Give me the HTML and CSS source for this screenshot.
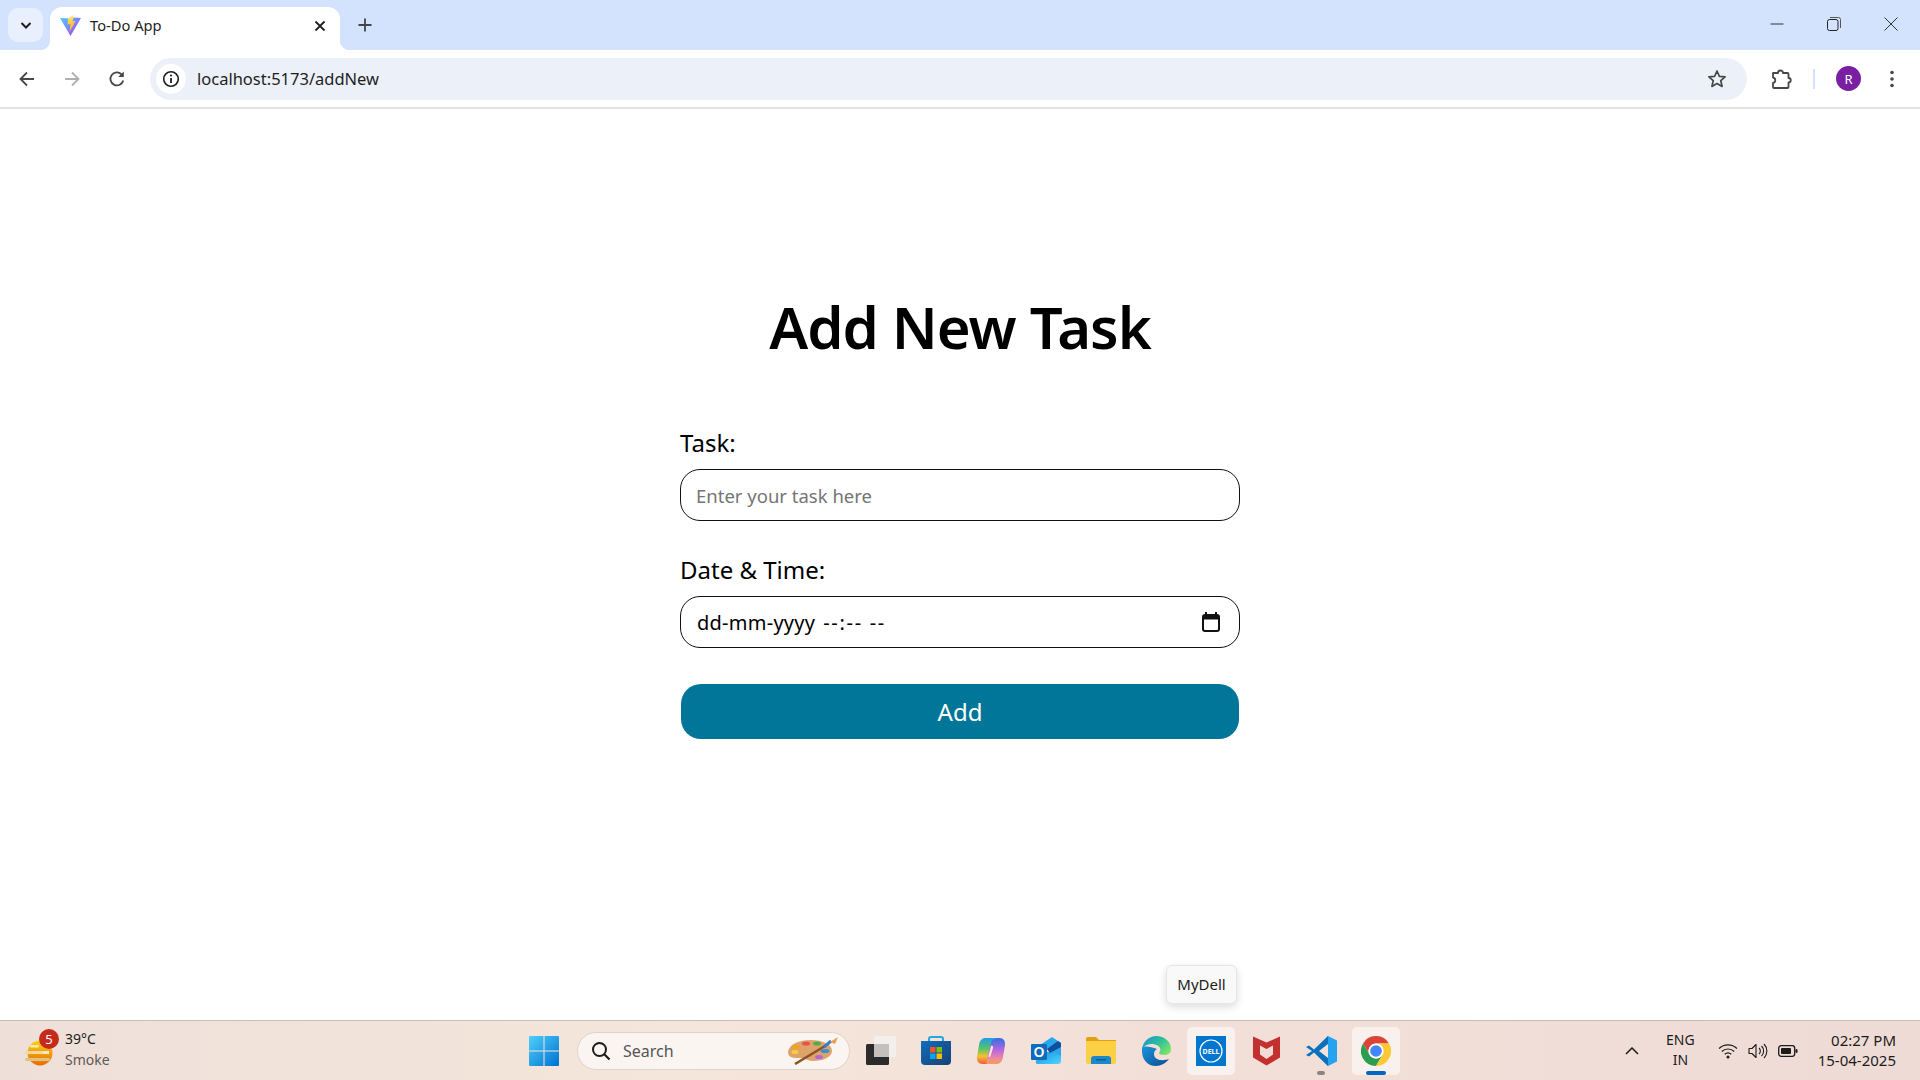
FILE: index.html
```html
<!DOCTYPE html>
<html lang="en">
  <head>
    <meta charset="UTF-8" />
    <meta name="viewport" content="width=device-width, initial-scale=1.0" />
    <title>To-Do App</title>
    <link rel="stylesheet" href="styles.css">
  </head>
  <body>
    <!-- Browser tab strip -->
    <div class="tabStrip">
      <div class="tabList">
        <svg width="14" height="14" viewBox="0 0 14 14"><path d="M2.500 5l4.500 4.500L11.500 5" fill="none" stroke="#1f1f1f" stroke-width="2"/></svg>
      </div>
      <div class="tab">
        <svg class="favicon" width="21" height="21" viewBox="0 0 21 21">
          <defs>
            <linearGradient id="viteA" x1="0" y1="0" x2="1" y2="1"><stop offset="0" stop-color="#41d1ff"/><stop offset="1" stop-color="#bd34fe"/></linearGradient>
            <linearGradient id="viteB" x1="0" y1="0" x2="0" y2="1"><stop offset="0" stop-color="#ffea83"/><stop offset="1" stop-color="#ffa800"/></linearGradient>
          </defs>
          <path d="M0 3l10.500 18L21 3l-6-.5-4.500 1z" fill="url(#viteA)"/>
          <path d="M8 3.500L14 0l-1.500 6.500 3-.5-6 11 1-8-3 .5z" fill="url(#viteB)"/>
        </svg>
        <span class="tabTitle">To-Do App</span>
        <svg class="tabClose" width="12" height="12" viewBox="0 0 12 12"><path d="M1.500 1.500l9 9M10.500 1.500l-9 9" stroke="#1f1f1f" stroke-width="1.800"/></svg>
      </div>
      <svg class="newTab" width="14" height="14" viewBox="0 0 14 14"><path d="M7 0.500v13M0.500 7h13" stroke="#444" stroke-width="1.800"/></svg>
      <div class="windowControls">
        <svg width="14" height="14" viewBox="0 0 14 14"><path d="M0.500 7h13" stroke="#333" stroke-width="1"/></svg>
        <svg width="14" height="14" viewBox="0 0 14 14"><rect x="0.500" y="2.500" width="10.500" height="11" rx="2" fill="none" stroke="#222" stroke-width="1"/><path d="M3 0.500h8.500a2 2 0 0 1 2 2V11" fill="none" stroke="#555" stroke-width="1"/></svg>
        <svg width="14" height="14" viewBox="0 0 14 14"><path d="M0.500 0.500l13 13M13.500 0.500l-13 13" stroke="#333" stroke-width="1"/></svg>
      </div>
    </div>

    <!-- Browser toolbar -->
    <div class="toolbar">
      <svg class="navBtn" width="18" height="18" viewBox="0 0 18 18"><path d="M16 9H2.500M9 2.500L2.500 9 9 15.500" fill="none" stroke="#474747" stroke-width="1.800"/></svg>
      <svg class="navBtn" width="18" height="18" viewBox="0 0 18 18"><path d="M2 9h13.500M9 2.500L15.500 9 9 15.500" fill="none" stroke="#b0b0b0" stroke-width="1.800"/></svg>
      <svg class="navBtn" width="18" height="18" viewBox="0 0 18 18"><path d="M15.200 10.500A6.500 6.500 0 1 1 13.500 4.300" fill="none" stroke="#474747" stroke-width="1.800"/><path d="M15.800 1.500v5.600h-5.600z" fill="#474747"/></svg>
      <div class="addressBar">
        <span class="siteInfo">
          <svg width="18" height="18" viewBox="0 0 18 18"><circle cx="9" cy="9" r="7.300" fill="none" stroke="#1f1f1f" stroke-width="1.600"/><path d="M9 8v5" stroke="#1f1f1f" stroke-width="1.800"/><circle cx="9" cy="5.500" r="1.100" fill="#1f1f1f"/></svg>
        </span>
        <span class="url">localhost:5173/addNew</span>
        <svg class="star" width="20" height="20" viewBox="0 0 20 20"><path d="M10 2l2.400 5.300 5.700.6-4.300 3.800 1.300 5.700L10 14.500l-5.100 2.900 1.300-5.700L1.900 7.900l5.700-.6z" fill="none" stroke="#474747" stroke-width="1.700" stroke-linejoin="round"/></svg>
      </div>
      <svg class="extensions" width="22" height="22" viewBox="0 0 22 22"><path d="M3 5h5a2.500 2.500 0 0 1 5 0h4.500a1 1 0 0 1 1 1v4a2.200 2.200 0 0 1 0 4.500V19a1 1 0 0 1-1 1H4a1 1 0 0 1-1-1v-4a2.800 2.800 0 0 0 0-5.500z" fill="none" stroke="#474747" stroke-width="1.800" stroke-linejoin="round"/></svg>
      <span class="toolbarSep"></span>
      <span class="avatar">R</span>
      <svg class="menuDots" width="6" height="18" viewBox="0 0 6 18"><circle cx="3" cy="2.500" r="1.800" fill="#474747"/><circle cx="3" cy="9" r="1.800" fill="#474747"/><circle cx="3" cy="15.500" r="1.800" fill="#474747"/></svg>
    </div>

    <!-- Page content -->
    <main class="page">
      <h1 class="pageTitle">Add New Task</h1>
      <form class="taskForm" autocomplete="off">
        <label class="fieldLabel" for="task">Task:</label>
        <input class="fieldInput" type="text" id="task" placeholder="Enter your task here" />
        <label class="fieldLabel" for="when">Date &amp; Time:</label>
        <div class="fieldInput dateField" id="when">
          <span class="dateText"><span>dd-mm-yyyy</span><span class="timeText">--:-- --</span></span>
          <svg width="18" height="20" viewBox="0 0 18 20"><path d="M4 0v4M14 0v4" stroke="#111" stroke-width="2"/><rect x="1" y="3" width="16" height="16" rx="2" fill="none" stroke="#111" stroke-width="2"/><rect x="1" y="3" width="16" height="4.500" fill="#111"/></svg>
        </div>
        <button class="addBtn" type="button">Add</button>
      </form>
      <div class="tooltip">MyDell</div>
    </main>

    <!-- Windows taskbar -->
    <footer class="taskbar">
      <div class="weather">
        <svg class="weatherIcon" width="28" height="26" viewBox="0 0 28 26">
          <defs><linearGradient id="sun" x1="0" y1="0" x2="0" y2="1"><stop offset="0" stop-color="#fcd116"/><stop offset="1" stop-color="#ea6a00"/></linearGradient></defs>
          <circle cx="15" cy="13" r="12.500" fill="url(#sun)"/>
          <rect x="0" y="11" width="24" height="3" rx="1.500" fill="#f3d9a0"/>
          <rect x="18" y="11" width="6" height="3" fill="#f4e5cc"/>
          <rect x="0" y="18" width="25" height="3" rx="1.500" fill="#dcc383"/>
          <rect x="5" y="5" width="9" height="2.500" rx="1.200" fill="#fbe9a8"/>
        </svg>
        <span class="weatherBadge">5</span>
        <div class="weatherText"><span>39°C</span><span class="weatherSub">Smoke</span></div>
      </div>

      <div class="taskIcons">
        <div class="taskItem">
          <svg width="30" height="30" viewBox="0 0 30 30">
            <defs><linearGradient id="win" x1="0" y1="0" x2="1" y2="1"><stop offset="0" stop-color="#4fd0fb"/><stop offset="1" stop-color="#0071cf"/></linearGradient></defs>
            <path d="M0 1a1 1 0 0 1 1-1h13.500v14.500H0zM15.500 0H29a1 1 0 0 1 1 1v13.500H15.500zM0 15.500h14.500V30H1a1 1 0 0 1-1-1zM15.500 15.500H30V29a1 1 0 0 1-1 1H15.500z" fill="url(#win)"/>
          </svg>
        </div>
        <div class="searchBox">
          <svg width="20" height="20" viewBox="0 0 20 20"><circle cx="8.500" cy="8.500" r="6.500" fill="none" stroke="#1c1c1c" stroke-width="2"/><path d="M13.300 13.300L18.500 18.500" stroke="#1c1c1c" stroke-width="2.200"/></svg>
          <span class="searchText">Search</span>
          <svg class="palette" width="52" height="28" viewBox="0 0 52 28">
            <path d="M1 15C2 7 12 3 24 3c11 0 21 4 21 11 0 6-9 10-19 10-6 0-7-3-12-3-5 0-13 1-13-6z" fill="#dea26b"/>
            <ellipse cx="9" cy="10" rx="4" ry="2" fill="#f2a21e"/>
            <ellipse cx="19" cy="6.500" rx="4" ry="2" fill="#e8504c"/>
            <ellipse cx="30" cy="6.500" rx="4" ry="2" fill="#4caf50"/>
            <ellipse cx="38" cy="14" rx="4.500" ry="2" fill="#3b8fd8"/>
            <ellipse cx="32" cy="20" rx="4" ry="2" fill="#b565d8"/>
            <ellipse cx="8" cy="15" rx="3.500" ry="2" fill="#f7cf3a"/>
            <path d="M8 27L38 9" stroke="#8a5426" stroke-width="2.500"/>
            <path d="M37 10L44 4" stroke="#3a7fc4" stroke-width="3"/>
            <path d="M43 5L51 0l-3 7z" fill="#e8a04c"/>
          </svg>
        </div>
        <div class="taskItem">
          <svg width="30" height="30" viewBox="0 0 30 30">
            <rect x="0" y="8" width="23" height="21" rx="1.500" fill="#2b2b2b"/>
            <rect x="8" y="0" width="22" height="21" rx="1.500" fill="#f2efed"/>
            <rect x="8" y="8" width="15" height="13" fill="#c3c0be"/>
          </svg>
        </div>
        <div class="taskItem">
          <svg width="30" height="30" viewBox="0 0 30 30">
            <defs><linearGradient id="store" x1="0" y1="0" x2="1" y2="1"><stop offset="0" stop-color="#0e6fbd"/><stop offset="1" stop-color="#1b3f73"/></linearGradient></defs>
            <path d="M8 6V3a2 2 0 0 1 2-2h10a2 2 0 0 1 2 2v3" fill="none" stroke="#27a6dd" stroke-width="2"/>
            <path d="M0 5h30v20a4 4 0 0 1-4 4H4a4 4 0 0 1-4-4z" fill="url(#store)"/>
            <rect x="9" y="11" width="5.500" height="5.500" fill="#f35325"/>
            <rect x="15.500" y="11" width="5.500" height="5.500" fill="#81bc06"/>
            <rect x="9" y="17.500" width="5.500" height="5.500" fill="#05a6f0"/>
            <rect x="15.500" y="17.500" width="5.500" height="5.500" fill="#ffba08"/>
          </svg>
        </div>
        <div class="taskItem">
          <svg width="30" height="28" viewBox="0 0 30 28">
            <defs>
              <linearGradient id="copA" x1="0" y1="0" x2="0" y2="1"><stop offset="0" stop-color="#1f9ee8"/><stop offset="0.400" stop-color="#55c46a"/><stop offset="0.700" stop-color="#f2c230"/><stop offset="1" stop-color="#ee5a45"/></linearGradient>
              <linearGradient id="copB" x1="0" y1="0" x2="0" y2="1"><stop offset="0" stop-color="#2f6fe4"/><stop offset="0.450" stop-color="#b565e0"/><stop offset="0.800" stop-color="#f08aa0"/><stop offset="1" stop-color="#f5a04a"/></linearGradient>
            </defs>
            <path d="M9 1h8c2 0 3 1 2.500 3L15 22c-.7 3-3 5-6 5H6.500C2.500 27 .5 24 1 20l2-12C3.500 4 6 1 9 1z" fill="url(#copA)"/>
            <path d="M21 27h-8c-2 0-3-1-2.500-3L15 6c.7-3 3-5 6-5h2.500c4 0 6 3 5.500 7l-2 12c-.5 4-3 7-6 7z" fill="url(#copB)"/>
            <path d="M15 9c1.500-.5 2.500.5 2 2l-2.500 8c-.5 1.500-2 1.500-2 0z" fill="#f9e7e0"/>
          </svg>
        </div>
        <div class="taskItem">
          <svg width="30" height="27" viewBox="0 0 30 27">
            <defs><linearGradient id="outlook" x1="0" y1="0" x2="1" y2="1"><stop offset="0" stop-color="#1490df"/><stop offset="1" stop-color="#50d9ff"/></linearGradient></defs>
            <path d="M5 15h25v9a3 3 0 0 1-3 3H10a3 3 0 0 1-5-3z" fill="url(#outlook)"/>
            <path d="M9 8L21 0l9 6v13L16 12z" fill="#28a8ea"/>
            <path d="M16 12l11-8 3 2v4L19 16z" fill="#0f4f9e"/>
            <rect x="0" y="7" width="16" height="16" rx="1" fill="#0f6cbd"/>
            <text x="8" y="20" class="outlookLetter" text-anchor="middle">O</text>
          </svg>
        </div>
        <div class="taskItem">
          <svg width="30" height="27" viewBox="0 0 30 27">
            <path d="M0 2a2 2 0 0 1 2-2h8l3 3h17v4H0z" fill="#e0a10f"/>
            <path d="M0 4h30v21a2 2 0 0 1-2 2H2a2 2 0 0 1-2-2z" fill="#fccf45"/>
            <path d="M5 21a3 3 0 0 1 3-2h14a3 3 0 0 1 3 2v6H5z" fill="#1c87c9"/>
            <rect x="10" y="22" width="10" height="1.500" fill="#0f5f93"/>
          </svg>
        </div>
        <div class="taskItem">
          <svg width="30" height="30" viewBox="0 0 30 30">
            <defs>
              <linearGradient id="edgeA" x1="0" y1="0" x2="1" y2="0.700"><stop offset="0" stop-color="#1a8fd6"/><stop offset="0.550" stop-color="#2cbf9a"/><stop offset="1" stop-color="#7be36a"/></linearGradient>
              <linearGradient id="edgeB" x1="0" y1="0" x2="1" y2="1"><stop offset="0" stop-color="#1c94dc"/><stop offset="1" stop-color="#0d4d92"/></linearGradient>
            </defs>
            <path d="M1 13C2 5 9 0 15 0c9 0 15 6 15 13 0 4-3 6-7 6-3 0-5-1-5-2 1-1.500 2-3 1-5-2-4-11-6-16-1z" fill="url(#edgeA)"/>
            <path d="M1 12C0 24 7 30 15 30c5 0 10-3 13-7-3 1-8 2-12 0s-4-8 0-10C10 11 4 9 1 12z" fill="url(#edgeB)"/>
          </svg>
        </div>
        <div class="taskItem taskItemLit">
          <svg width="30" height="30" viewBox="0 0 30 30">
            <rect width="30" height="30" fill="#0076ce"/>
            <circle cx="15" cy="15" r="11" fill="none" stroke="#fff" stroke-width="1.200"/>
            <text x="15" y="17.500" class="dellText" text-anchor="middle">DELL</text>
          </svg>
        </div>
        <div class="taskItem">
          <svg width="27" height="30" viewBox="0 0 27 30"><path d="M0 0.500L13.500 6.500 27 0.500V21.500L13.500 29.500 0 21.500z" fill="#c2302f"/><path d="M7 9.500L13.500 13 20 9.500V18.500L13.500 23 7 18.500z" fill="#f2dcd5"/></svg>
        </div>
        <div class="taskItem">
          <svg width="31" height="30" viewBox="0 0 31 30">
            <path d="M22 0l9 4.500v21L22 30 8 16z" fill="#26a3f0"/>
            <path d="M22 0L8 13.500 3 9.500 0 11l6 4-6 4 3 1.500 5-4L22 30z" fill="#0a72bd"/>
            <path d="M22 8v14l-9-7z" fill="#f3e2db"/>
          </svg>
          <span class="runDot"></span>
        </div>
        <div class="taskItem taskItemLit">
          <svg width="30" height="30" viewBox="0 0 30 30">
            <path d="M28 7.500A15 15 0 0 0 2 7.500L8.500 18.750A7.500 7.500 0 0 1 15 7.500Z" fill="#db4437"/>
            <path d="M2 7.500A15 15 0 0 0 15 30L21.500 18.750A7.500 7.500 0 0 1 8.500 18.750Z" fill="#2a9d4f"/>
            <path d="M15 30A15 15 0 0 0 28 7.500H15A7.500 7.500 0 0 1 21.500 18.750Z" fill="#fcc934"/>
            <circle cx="15" cy="15" r="7.500" fill="#fff"/>
            <circle cx="15" cy="15" r="5.800" fill="#4285f4"/>
          </svg>
          <span class="activeBar"></span>
        </div>
      </div>

      <div class="tray">
        <svg class="trayChevron" width="14" height="8" viewBox="0 0 14 8"><path d="M1 7l6-6 6 6" fill="none" stroke="#1c1c1c" stroke-width="1.500"/></svg>
        <div class="trayLang"><span>ENG</span><span>IN</span></div>
        <div class="trayIcons">
          <svg width="20" height="16" viewBox="0 0 20 16"><path d="M1 5.500a13 13 0 0 1 18 0M3.800 8.500a9 9 0 0 1 12.400 0M6.700 11.300a5 5 0 0 1 6.600 0" fill="none" stroke="#1c1c1c" stroke-width="1.200"/><circle cx="10" cy="14" r="1.500" fill="#1c1c1c"/></svg>
          <svg width="20" height="16" viewBox="0 0 20 16"><path d="M1 5.500h3l4-4v13l-4-4H1z" fill="none" stroke="#1c1c1c" stroke-width="1.100" stroke-linejoin="round"/><path d="M11 5a4 4 0 0 1 0 6M13.500 3a7 7 0 0 1 0 10M16 1a10 10 0 0 1 0 14" fill="none" stroke="#1c1c1c" stroke-width="1.100"/></svg>
          <svg width="20" height="12" viewBox="0 0 20 12"><rect x="0.700" y="0.700" width="16" height="10.600" rx="2.500" fill="none" stroke="#1c1c1c" stroke-width="1.300"/><rect x="3" y="3" width="10" height="6" rx="1" fill="#1c1c1c"/><rect x="17.500" y="4" width="2" height="4" rx="1" fill="#1c1c1c"/></svg>
        </div>
        <div class="clock"><span>02:27 PM</span><span>15-04-2025</span></div>
      </div>
    </footer>
  </body>
</html>
```

FILE: styles.css
```css
* {
  box-sizing: border-box;
}
html,
body {
  height: 100%;
}
body {
  margin: 0;
  display: flex;
  flex-direction: column;
  min-height: 1080px;
  background: #fff;
  font-family: "Noto Sans", "Open Sans", Arial, sans-serif;
  color: #000;
  overflow: hidden;
}
/* Browser tab strip */
.tabStrip {
  height: 50px;
  flex: none;
  background: #d3e3fd;
  display: flex;
  align-items: flex-end;
  padding-left: 8px;
}
.tabList {
  width: 35px;
  height: 34px;
  margin-bottom: 8px;
  background: #e8f0fe;
  border-radius: 10px;
  display: flex;
  justify-content: center;
  align-items: center;
}
.tab {
  position: relative;
  width: 290px;
  height: 43px;
  margin-left: 7px;
  background: #fff;
  border-radius: 12px 12px 0 0;
  display: flex;
  align-items: center;
  padding: 0 12px 6px 10px;
}
.tab::before,
.tab::after {
  content: "";
  position: absolute;
  bottom: 0;
  width: 10px;
  height: 10px;
}
.tab::before {
  left: -10px;
  background: radial-gradient(circle at 0 0, #d3e3fd 10px, #fff 10.500px);
}
.tab::after {
  right: -10px;
  background: radial-gradient(circle at 100% 0, #d3e3fd 10px, #fff 10.500px);
}
.favicon {
  flex: none;
}
.tabTitle {
  margin: 0 0 2px 9px;
  font-size: 14.700px;
  color: #1f1f1f;
  flex: 1;
}
.tabClose {
  flex: none;
  margin-right: 2px;
}
.newTab {
  margin: 0 0 18px 18px;
}
.windowControls {
  margin-left: auto;
  display: flex;
  gap: 43px;
  padding-right: 22px;
  margin-bottom: 19px;
}
/* Browser toolbar */
.toolbar {
  height: 59px;
  flex: none;
  background: #fff;
  border-bottom: 2px solid #e2e2e2;
  border-radius: 12px 12px 0 0;
  display: flex;
  align-items: center;
  padding: 0 0 0 18px;
}
.navBtn {
  margin-right: 27px;
  flex: none;
}
.addressBar {
  margin-left: -3px;
  width: 1597px;
  height: 42px;
  border-radius: 21px;
  background: #ecf1f9;
  display: flex;
  align-items: center;
  padding: 0 20px 0 6px;
}
.siteInfo {
  width: 30px;
  height: 30px;
  background: #fff;
  border-radius: 50%;
  display: flex;
  justify-content: center;
  align-items: center;
}
.url {
  margin-left: 11px;
  font-size: 16.500px;
  color: #1f1f1f;
  flex: 1;
}
.extensions {
  margin-left: 23px;
  flex: none;
}
.toolbarSep {
  width: 2px;
  height: 20px;
  background: #d3e3fd;
  margin-left: 21px;
}
.avatar {
  width: 25px;
  height: 25px;
  margin-left: 21px;
  border-radius: 50%;
  background: #7b1fa2;
  color: #fff;
  font-size: 13px;
  display: flex;
  justify-content: center;
  align-items: center;
}
.menuDots {
  margin-left: 28px;
}
/* Page content */
.page {
  position: relative;
  flex: 1;
  display: flex;
  flex-direction: column;
  align-items: center;
  padding-top: 178px;
}
.pageTitle {
  margin: 0;
  font-size: 58px;
  line-height: 80px;
  font-weight: 600;
  letter-spacing: -1px;
}
.taskForm {
  width: 560px;
  margin-top: 59px;
  display: flex;
  flex-direction: column;
}
.fieldLabel {
  font-size: 24px;
  line-height: 34px;
  margin-bottom: 9px;
}
.fieldInput {
  width: 100%;
  height: 52px;
  margin-bottom: 32px;
  padding: 0 15px;
  border: 1.500px solid #111;
  border-radius: 20px;
  background: #fff;
  font-family: inherit;
  font-size: 18.500px;
  outline: none;
}
.fieldInput::placeholder {
  color: #757575;
}
.dateField {
  display: flex;
  align-items: center;
  justify-content: space-between;
  margin-bottom: 36px;
  padding: 0 19px 0 16px;
  font-size: 20px;
}
.dateText {
  display: flex;
  gap: 8px;
  letter-spacing: 0.250px;
}
.timeText {
  letter-spacing: 1.700px;
}
.addBtn {
  height: 55px;
  margin: 0 1px;
  border: none;
  border-radius: 20px;
  background: #017698;
  color: #fff;
  font-family: inherit;
  font-size: 24px;
}
.tooltip {
  position: absolute;
  left: 1166px;
  top: 856px;
  width: 71px;
  height: 39px;
  padding-bottom: 2px;
  background: #f9f9f9;
  border: 1px solid #e6e6e6;
  border-radius: 6px;
  box-shadow: 0 3px 8px rgba(0, 0, 0, 0.14);
  font-size: 15px;
  color: #1c1c1c;
  display: flex;
  justify-content: center;
  align-items: center;
}
/* Windows taskbar */
.taskbar {
  height: 60px;
  flex: none;
  border-top: 1px solid #c8bcb6;
  background: linear-gradient(90deg, #eedfd9 0%, #f5e6db 35%, #f2e0d8 60%, #efdbd6 100%);
  display: grid;
  grid-template-columns: 1fr auto 1fr;
  align-items: center;
  font-size: 14px;
  color: #1c1c1c;
}
.weather {
  position: relative;
  display: flex;
  align-items: center;
  padding-left: 25px;
}
.weatherIcon {
  flex: none;
  margin-top: 5px;
}
.weatherBadge {
  position: absolute;
  left: 39px;
  top: -2px;
  width: 20px;
  height: 20px;
  border-radius: 50%;
  background: #c42b1c;
  color: #fff;
  font-size: 13px;
  display: flex;
  justify-content: center;
  align-items: center;
}
.weatherText {
  margin: -3px 0 0 12px;
  display: flex;
  flex-direction: column;
  line-height: 21px;
}
.weatherSub {
  color: #5f5a57;
}
.taskIcons {
  display: flex;
  align-items: center;
  gap: 7px;
}
.taskItem {
  position: relative;
  width: 48px;
  height: 48px;
  border-radius: 5px;
  display: flex;
  justify-content: center;
  align-items: center;
}
.taskItemLit {
  background: rgba(255, 255, 255, 0.55);
}
.searchBox {
  width: 273px;
  height: 38px;
  margin: 0 0 0 2px;
  border-radius: 19px;
  border: 1px solid #dfd3cd;
  background: #fbf5f2;
  display: flex;
  align-items: center;
  padding: 0 10px 0 13px;
}
.searchText {
  margin-left: 12px;
  flex: 1;
  font-size: 16px;
  color: #555;
}
.palette {
  flex: none;
}
.outlookLetter {
  font-family: "Noto Sans", sans-serif;
  font-size: 14px;
  font-weight: 600;
  fill: #fff;
}
.dellText {
  font-family: "Noto Sans", sans-serif;
  font-size: 7px;
  font-weight: 700;
  fill: #fff;
}
.runDot {
  position: absolute;
  bottom: 0;
  left: 20px;
  width: 8px;
  height: 4px;
  border-radius: 2px;
  background: #8a8583;
}
.activeBar {
  position: absolute;
  bottom: 0;
  left: 14px;
  width: 20px;
  height: 4px;
  border-radius: 2px;
  background: #0067c0;
}
.tray {
  display: flex;
  align-items: center;
  justify-content: flex-end;
  padding-right: 24px;
}
.trayChevron {
  flex: none;
}
.trayLang {
  margin: -2px 0 0 27px;
  display: flex;
  flex-direction: column;
  align-items: center;
  line-height: 20px;
}
.trayIcons {
  margin-left: 23px;
  display: flex;
  align-items: center;
  gap: 10px;
}
.clock {
  margin: -2px 0 0 20px;
  display: flex;
  flex-direction: column;
  align-items: flex-end;
  font-size: 15px;
  line-height: 20px;
}
```
